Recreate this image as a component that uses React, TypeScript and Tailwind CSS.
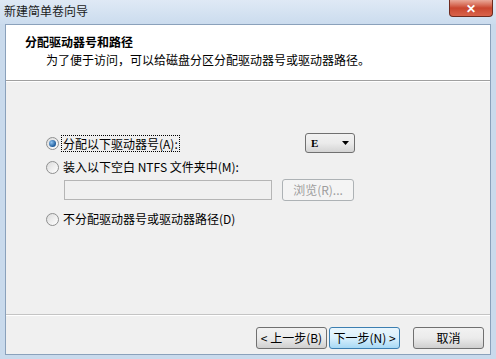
import React from 'react'

const font = { fontFamily: '"Noto Sans CJK SC", "Liberation Sans", sans-serif' }

function Radio({ checked }: { checked?: boolean }) {
  return (
    <div className="w-[13px] h-[13px] rounded-full border border-[#8e8f8f] bg-gradient-to-br from-[#dcdcdc] to-[#ffffff] flex items-center justify-center shrink-0">
      {checked && (
        <div className="w-[7px] h-[7px] rounded-full bg-[radial-gradient(circle_at_35%_35%,#8fc3f0,#1c5a9a_70%)]" />
      )}
    </div>
  )
}

function Button({ children, focused, disabled, className = '' }: { children: React.ReactNode; focused?: boolean; disabled?: boolean; className?: string }) {
  const look = focused
    ? 'border-[#3c7fb1] bg-gradient-to-b from-[#eaf6fd] via-[#d9f0fc] to-[#a7d9f5]'
    : disabled
      ? 'border-[#adb2b5] bg-[#f4f4f4] text-[#9d9d9d]'
      : 'border-[#707070] bg-gradient-to-b from-[#f2f2f2] via-[#ebebeb] to-[#cfcfcf]'
  return (
    <div className={`h-[22px] rounded-[3px] border flex items-center justify-center text-[12px] leading-none ${look} ${className}`}>
      {children}
    </div>
  )
}

export default function App() {
  return (
    <div className="w-[496px] h-[359px] bg-[#c9daec] flex flex-col text-black text-[12px]" style={font}>
      {/* title bar */}
      <div className="h-[24px] flex items-start justify-between bg-gradient-to-b from-[#dfe9f5] to-[#cbdcee] shrink-0">
        <div className="pl-[4px] pt-[3px] leading-[16px] text-[12px] text-[#1a1a1a]">新建简单卷向导</div>
        <div className="mr-[3px] w-[44px] h-[17px] rounded-b-[4px] border border-t-0 border-[#6e2a1e] bg-gradient-to-b from-[#e9a899] via-[#c9462f] to-[#d9634a] flex items-center justify-center text-white font-bold text-[12px] leading-none">
          ✕
        </div>
      </div>

      {/* client */}
      <div className="flex-1 mx-[5px] mb-[4px] border border-[#8aa1bb] bg-[#f0f0f0] flex flex-col">
        <div className="h-[56px] bg-white border-b border-[#a0a0a0] pt-[9px] pl-[19px] leading-[16px] shrink-0">
          <div className="font-bold">分配驱动器号和路径</div>
          <div className="pl-[21px] mt-[2px]">为了便于访问，可以给磁盘分区分配驱动器号或驱动器路径。</div>
        </div>

        <div className="flex-1 pl-[40px] pt-[51px] border-t border-white">
          <div className="w-[309px] h-[20px] flex items-center">
            <Radio checked />
            <div className="ml-[2px] px-[1px] border border-dotted border-black leading-[15px]">分配以下驱动器号(A):</div>
            <div className="ml-auto w-[50px] h-[20px] rounded-[3px] border border-[#707070] bg-gradient-to-b from-[#f2f2f2] via-[#ebebeb] to-[#d4d4d4] flex items-center pl-[5px] pr-[5px]">
              <span className="text-[11px] font-bold" style={{ fontFamily: '"Liberation Serif", serif' }}>E</span>
              <svg className="ml-auto" width="7" height="4" viewBox="0 0 7 4"><path d="M0 0h7L3.5 4z" fill="#000" /></svg>
            </div>
          </div>

          <div className="mt-[6px] h-[16px] flex items-center">
            <Radio />
            <div className="ml-[4px] leading-[16px]">装入以下空白 NTFS 文件夹中(M):</div>
          </div>

          <div className="mt-[4px] ml-[18px] flex items-center">
            <div className="w-[208px] h-[20px] border border-[#b5b5b5] bg-[#f0f0f0]" />
            <Button disabled className="ml-[10px] w-[72px] h-[20px]">浏览(R)...</Button>
          </div>

          <div className="mt-[10px] h-[16px] flex items-center">
            <Radio />
            <div className="ml-[4px] leading-[16px]">不分配驱动器号或驱动器路径(D)</div>
          </div>
        </div>

        <div className="h-[2px] bg-[#c4c4c4] border-b border-white shrink-0" />

        <div className="h-[38px] flex items-start justify-end pr-[6px] pt-[11px] shrink-0">
          <Button className="w-[71px]">&lt; 上一步(B)</Button>
          <Button focused className="ml-[2px] w-[71px]">下一步(N) &gt;</Button>
          <Button className="ml-[13px] w-[71px]">取消</Button>
        </div>
      </div>
    </div>
  )
}
